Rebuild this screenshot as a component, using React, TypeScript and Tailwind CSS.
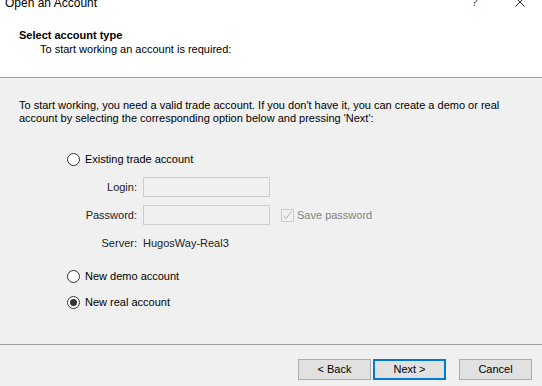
import React from "react";

const Radio = ({ checked }: { checked?: boolean }) => (
  <span className="w-[13px] h-[13px] rounded-full border border-[#333333] bg-white flex items-center justify-center shrink-0">
    {checked && <span className="w-[7px] h-[7px] rounded-full bg-[#333333]" />}
  </span>
);

const RadioRow = ({ label, checked }: { label: string; checked?: boolean }) => (
  <div className="flex items-center h-[16px] ml-[48px] gap-[5px]">
    <Radio checked={checked} />
    <span className="leading-[13px]">{label}</span>
  </div>
);

const Field = () => (
  <div className="h-[20px] w-[127px] border border-[#cccccc] bg-[#f0f0f0]" />
);

const Btn = ({ label, active }: { label: string; active?: boolean }) => (
  <button
    className={
      active
        ? "w-[73px] h-[21px] bg-[#e1e1e1] border-2 border-[#0078d7] text-[11px] leading-none"
        : "w-[73px] h-[21px] bg-[#e1e1e1] border border-[#adadad] text-[11px] leading-none"
    }
  >
    {label}
  </button>
);

export default function App() {
  return (
    <div className="w-[542px] h-[386px] bg-[#f0f0f0] flex flex-col overflow-hidden font-['Liberation_Sans',Arial,sans-serif] text-[11px] text-black">
      {/* header */}
      <div className="h-[78px] bg-white border-b border-[#a0a0a0] flex flex-col shrink-0">
        <div className="h-[14px] flex items-start overflow-hidden">
          <span className="ml-[5px] -mt-[3px] text-[12px] leading-[12px]">Open an Account</span>
          <span className="ml-auto -mt-[4px] text-[12px] leading-[12px] text-[#555555]">?</span>
          <svg className="ml-[37px] mr-[17px] -mt-[3px]" width="10" height="10" viewBox="0 0 10 10">
            <path d="M0.5 0.5 L9.5 9.5 M9.5 0.5 L0.5 9.5" stroke="#222222" strokeWidth="1" />
          </svg>
        </div>
        <div className="ml-[19px] mt-[15px] font-bold leading-[13px]">Select account type</div>
        <div className="ml-[40px] mt-[1px] leading-[13px]">To start working an account is required:</div>
      </div>

      {/* body */}
      <div className="flex-1 flex flex-col pl-[19px] pt-[21px]">
        <p className="leading-[13px] w-[515px]">
          To start working, you need a valid trade account. If you don't have it, you can create a demo or real
          account by selecting the corresponding option below and pressing 'Next':
        </p>
        <div className="mt-[26px]">
          <RadioRow label="Existing trade account" />
        </div>
        <div className="mt-[10px] grid grid-cols-[118px_127px_auto] gap-x-[6px] gap-y-[8px] items-center">
          <span className="text-right text-[#222222]">Login:</span>
          <Field />
          <span />
          <span className="text-right text-[#222222]">Password:</span>
          <Field />
          <div className="flex items-center ml-[5px] gap-[3px] text-[#838383]">
            <span className="w-[13px] h-[13px] border border-[#cccccc] bg-[#f0f0f0] flex items-center justify-center">
              <svg width="11" height="11" viewBox="0 0 11 11">
                <path d="M1.5 5.5 L4 8.5 L9.5 1.5" stroke="#b3b3b3" strokeWidth="1" fill="none" />
              </svg>
            </span>
            <span>Save password</span>
          </div>
          <span className="text-right text-[#222222] mt-[4px] leading-[13px]">Server:</span>
          <span className="mt-[4px] leading-[13px] text-[#222222]">HugosWay-Real3</span>
          <span />
        </div>
        <div className="mt-[18px]">
          <RadioRow label="New demo account" />
        </div>
        <div className="mt-[10px]">
          <RadioRow label="New real account" checked />
        </div>
      </div>

      {/* footer */}
      <div className="h-[42px] border-t border-[#a0a0a0] flex items-start justify-end pt-[14px] pr-[10px] shrink-0">
        <div className="flex gap-[2px]">
          <Btn label="< Back" />
          <Btn label="Next >" active />
        </div>
        <div className="ml-[13px]">
          <Btn label="Cancel" />
        </div>
      </div>
    </div>
  );
}
